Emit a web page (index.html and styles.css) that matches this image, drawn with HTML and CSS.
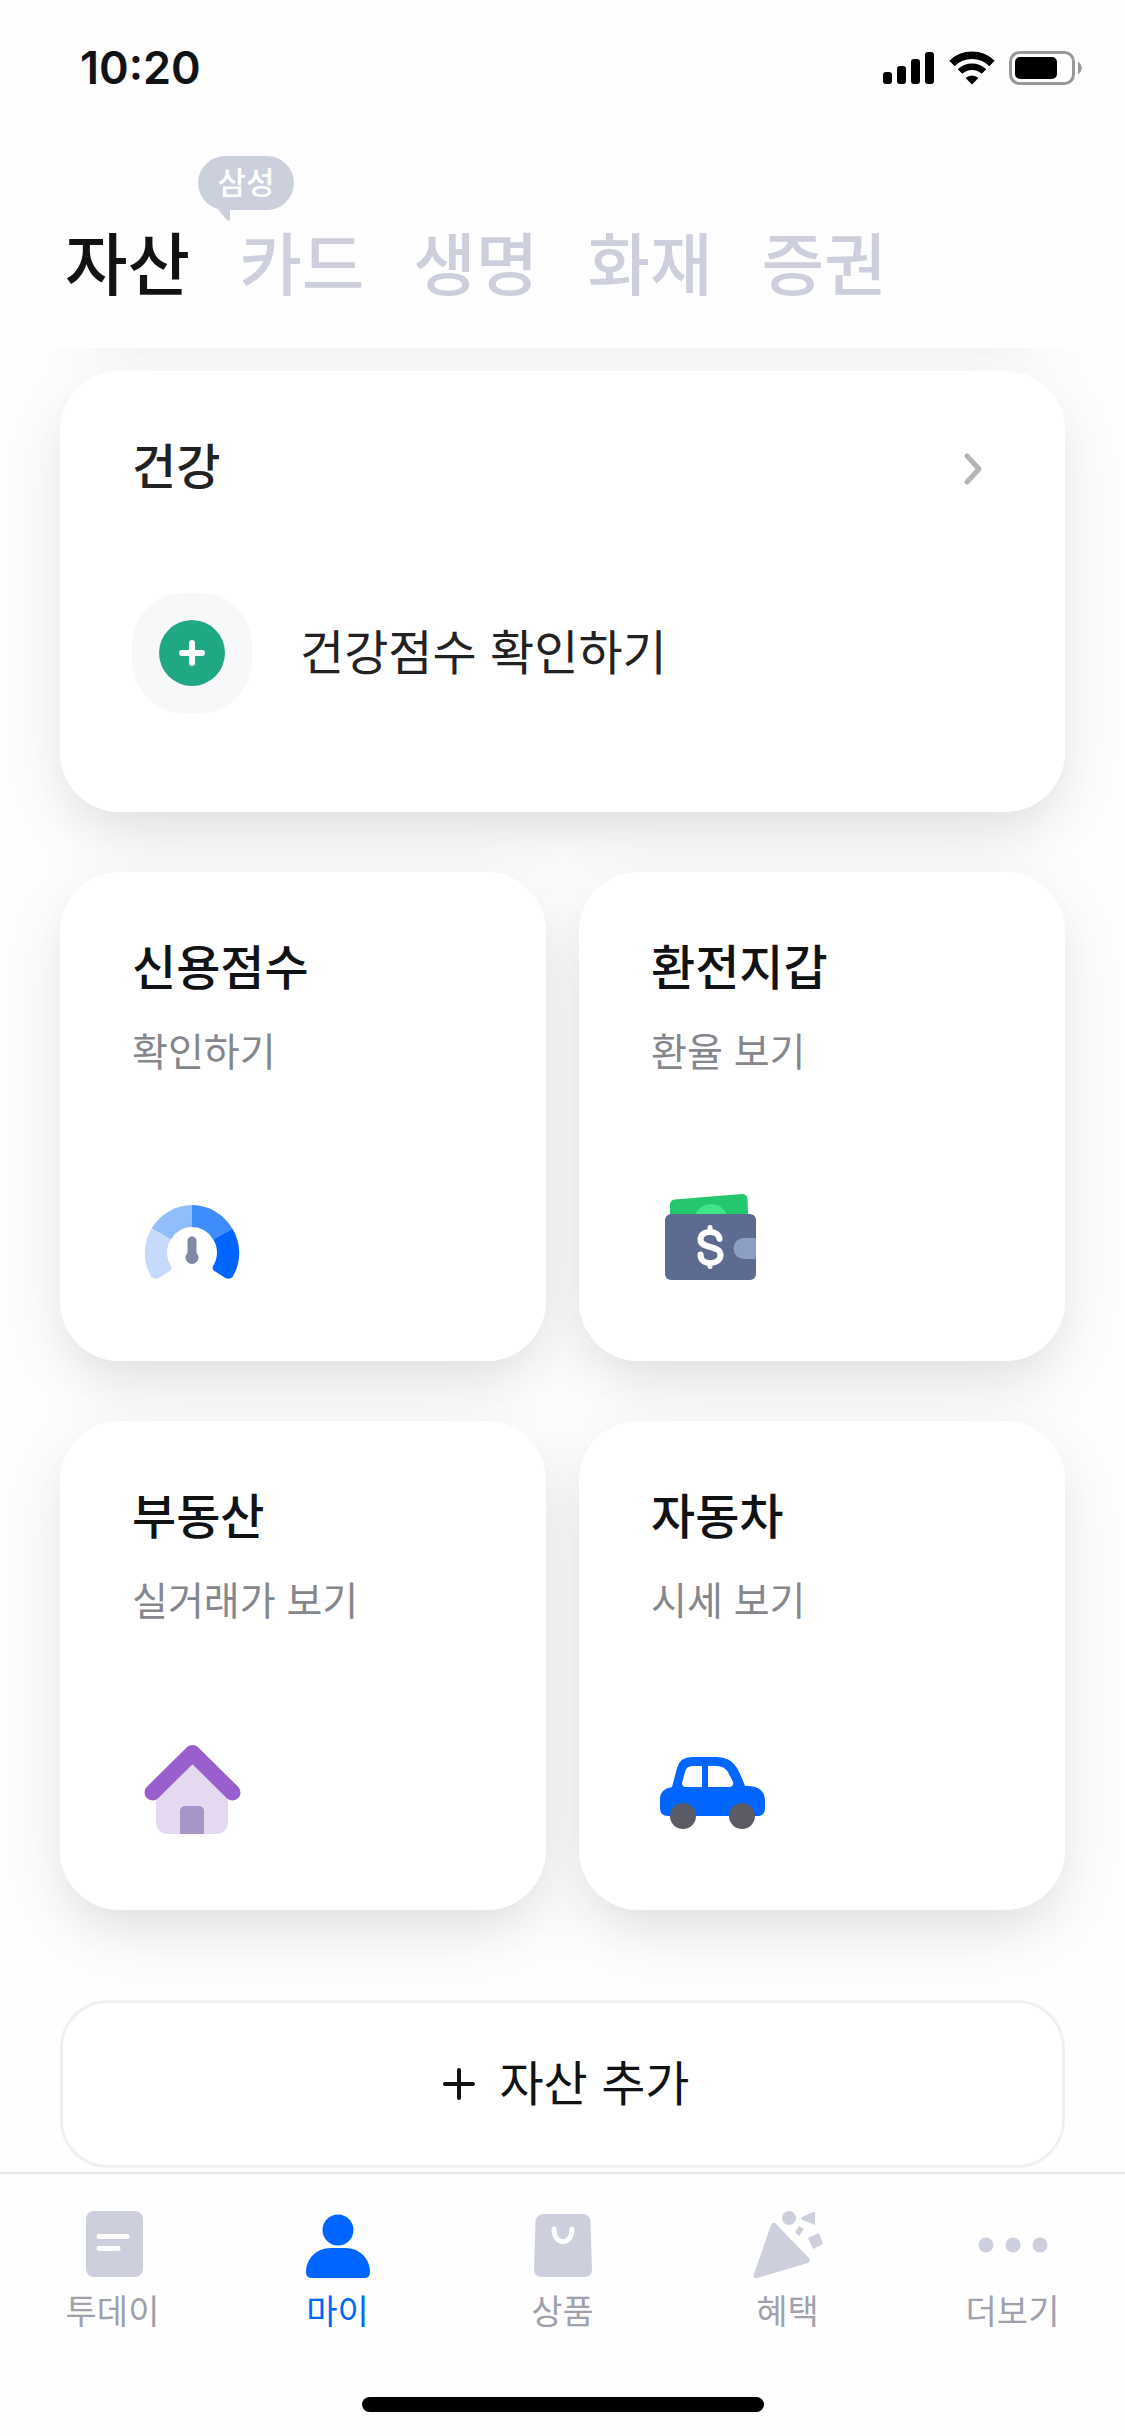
FILE: index.html
```html
<!DOCTYPE html>
<html lang="ko">
<head>
<meta charset="utf-8">
<meta name="viewport" content="width=device-width, initial-scale=1">
<title>자산</title>
<link rel="stylesheet" href="styles.css">
</head>
<body>
<div class="app">
  <header class="header">
    <div class="status">
      <time class="status-time">10:20</time>
      <div class="status-icons">
        <svg width="52" height="34" viewBox="0 0 52 34" aria-hidden="true">
          <rect x="0" y="21" width="9" height="12" rx="3"/>
          <rect x="14" y="15" width="9" height="18" rx="3"/>
          <rect x="28" y="8" width="9" height="25" rx="3"/>
          <rect x="42" y="1" width="9" height="32" rx="3"/>
        </svg>
        <svg width="46" height="34" viewBox="0 0 46 34" aria-hidden="true">
          <g fill="none" stroke="#000">
            <path d="M3 12.500A28.500 28.500 0 0 1 43 12.500" stroke-width="7.500"/>
            <path d="M11 20.500A17.500 17.500 0 0 1 35 20.500" stroke-width="6.500"/>
          </g>
          <path d="M16.500 27a9.500 9.500 0 0 1 13 0L23 33.500z"/>
        </svg>
        <svg width="74" height="34" viewBox="0 0 74 34" aria-hidden="true">
          <rect x="1.500" y="1.500" width="63" height="31" rx="9" fill="none" stroke="#999" stroke-width="3"/>
          <rect x="6" y="6" width="42" height="22" rx="5"/>
          <path d="M69 11c5 2 5 10 0 12z" fill="#999"/>
        </svg>
      </div>
    </div>
    <nav class="tabs" aria-label="자산 메뉴">
      <a class="tab tab-active" href="#" aria-current="page">자산</a>
      <a class="tab" href="#">카드
        <span class="badge">삼성
          <svg class="badge-tail" width="32" height="34" viewBox="0 0 32 34" aria-hidden="true"><path d="M0 0L27 32Q30 35 30 30V16z"/></svg>
        </span>
      </a>
      <a class="tab" href="#">생명</a>
      <a class="tab" href="#">화재</a>
      <a class="tab" href="#">증권</a>
    </nav>
  </header>

  <main class="feed">
    <section class="card health">
      <a class="health-head" href="#">
        <h2 class="title title-soft">건강</h2>
        <svg class="chevron" width="24" height="32" viewBox="0 0 24 32" aria-hidden="true"><path d="M6 3L18 16L6 29" fill="none" stroke="#b4b5b9" stroke-width="5" stroke-linecap="round" stroke-linejoin="round"/></svg>
      </a>
      <a class="health-row" href="#">
        <span class="health-icon">
          <svg width="66" height="66" viewBox="0 0 66 66" aria-hidden="true"><circle cx="33" cy="33" r="33" fill="#20a884"/><path d="M33 23V43M23 33H43" stroke="#fff" stroke-width="6" stroke-linecap="round"/></svg>
        </span>
        <span class="health-label">건강점수 확인하기</span>
      </a>
    </section>

    <div class="grid">
      <a class="card tile" href="#">
        <h2 class="title">신용점수</h2>
        <p class="sub">확인하기</p>
        <svg class="tile-icon" width="120" height="120" viewBox="0 0 120 120" aria-hidden="true">
          <g fill="none" stroke-width="22">
            <path d="M29.300 44A35.500 35.500 0 0 1 60 26" stroke="#92bdfd"/>
            <path d="M60 26A35.500 35.500 0 0 1 90.700 44" stroke="#3f8cfd"/>
          </g>
          <path d="M19.700 38.500L38.800 49.500A24.500 24.500 0 0 0 39 76Q40.500 79 37.500 81L26.500 88Q22.500 90 19.500 87A46.500 46.500 0 0 1 19.700 38.500z" fill="#c5dafd"/>
          <path d="M100.300 38.500L81.200 49.500A24.500 24.500 0 0 1 81 76Q79.500 79 82.500 81L93.500 88Q97.500 90 100.500 87A46.500 46.500 0 0 0 100.300 38.500z" fill="#0066ff"/>
          <path d="M60 51V66" stroke="#7f88a5" stroke-width="9" stroke-linecap="round"/>
          <circle cx="60" cy="67.500" r="6.500" fill="#7f88a5"/>
        </svg>
      </a>
      <a class="card tile" href="#">
        <h2 class="title">환전지갑</h2>
        <p class="sub">환율 보기</p>
        <svg class="tile-icon" width="120" height="120" viewBox="1 3 120 120" aria-hidden="true">
          <path d="M20 48V18q0-5 5-5.500L92 7q5 0 5.500 5L99 48z" fill="#23c86e"/>
          <circle cx="61" cy="34" r="17" fill="#40e588"/>
          <rect x="15" y="27" width="91" height="66" rx="6" fill="#5c6b8f"/>
          <path d="M106 51H94a10.500 10.500 0 0 0 0 21H106z" fill="#8d9ec5"/>
          <path d="M60 40.500V45M60 76V79.500" stroke="#fff" stroke-width="5" stroke-linecap="round"/>
          <path d="M69.500 52C69 47.500 65 45 60 45C54 45 50.500 48 50.500 52.500C50.500 62.500 70.500 57.500 70.500 68C70.500 73 66 76 60 76C54 76 50.500 73 50.500 67.500" fill="none" stroke="#fff" stroke-width="6" stroke-linecap="round"/>
        </svg>
      </a>
      <a class="card tile" href="#">
        <h2 class="title">부동산</h2>
        <p class="sub">실거래가 보기</p>
        <svg class="tile-icon" width="120" height="120" viewBox="0 0 120 120" aria-hidden="true">
          <path d="M24 56L60 18L96 56V83a12 12 0 0 1-12 12H36a12 12 0 0 1-12-12z" fill="#e5d9f2"/>
          <path d="M48 95V72a5 5 0 0 1 5-5H67a5 5 0 0 1 5 5V95z" fill="#a795c7"/>
          <path d="M20.500 53.500L60.500 14L100.500 53.500" fill="none" stroke="#9a5fcf" stroke-width="16" stroke-linecap="round" stroke-linejoin="round"/>
        </svg>
      </a>
      <a class="card tile" href="#">
        <h2 class="title">자동차</h2>
        <p class="sub">시세 보기</p>
        <svg class="tile-icon" width="120" height="120" viewBox="1 0 120 120" aria-hidden="true">
          <path d="M22 48L27 29Q30 18 42 18H67Q80 18 87 29Q91 36 95 47H99Q115 48 115 62V69Q115 77 107 77H18Q10 77 10 69V60Q10 50 22 48z" fill="#0066ff"/>
          <path d="M52 27H43Q36 27 35 33L32 44Q32 48 36 48H52z" fill="#fff"/>
          <path d="M58 27H67Q74 27 78 33L83 43Q84 48 79 48H58z" fill="#fff"/>
          <circle cx="33" cy="77" r="13" fill="#5b5b66"/>
          <circle cx="92" cy="77" r="13" fill="#5b5b66"/>
        </svg>
      </a>
    </div>

    <button class="add" type="button">
      <svg width="32" height="32" viewBox="0 0 32 32" aria-hidden="true"><path d="M16 2V30M2 16H30" stroke="#111" stroke-width="4" stroke-linecap="round"/></svg>
      <span class="add-label">자산 추가</span>
    </button>
  </main>

  <footer class="bottom">
    <nav class="menu" aria-label="주 메뉴">
      <a class="menu-item" href="#">
        <svg width="72" height="72" viewBox="0 0 72 72" aria-hidden="true"><rect x="9" y="3" width="57" height="66" rx="8"/><path d="M22 28.500H50M22 40.500H41" stroke="#fff" stroke-width="5" stroke-linecap="round"/></svg>
        투데이
      </a>
      <a class="menu-item menu-active" href="#" aria-current="page">
        <svg width="72" height="72" viewBox="0 0 72 72" aria-hidden="true"><circle cx="36" cy="22" r="15.500"/><path d="M29 40H43C59 40 68 52 68 64Q68 70 62 70H10Q4 70 4 64C4 52 13 40 29 40z"/></svg>
        마이
      </a>
      <a class="menu-item" href="#">
        <svg width="72" height="72" viewBox="0 0 72 72" aria-hidden="true"><path d="M17 6H55Q63 6 63.500 14L65 61Q65 69 57 69H15Q7 69 7 61L8.500 14Q9 6 17 6z"/><path d="M27 21C27 38 45 38 45 21" fill="none" stroke="#fff" stroke-width="5" stroke-linecap="round"/></svg>
        상품
      </a>
      <a class="menu-item" href="#">
        <svg width="72" height="72" viewBox="0 0 72 72" aria-hidden="true"><path d="M19 17Q21 13 24 16L57 50Q59 53 56 55L5 70Q1 71 2 66z"/><circle cx="37" cy="10" r="7"/><path d="M50 9L61 4Q63 3 63 5V16Q63 18 61 16L50 12Q48 10 50 9zM47 18L52 21L47 28L43 24zM56 30L67 25L71 36L61 41z"/></svg>
        혜택
      </a>
      <a class="menu-item" href="#">
        <svg width="72" height="72" viewBox="0 0 72 72" aria-hidden="true"><circle cx="9" cy="37" r="7.500"/><circle cx="36" cy="37" r="7.500"/><circle cx="63" cy="37" r="7.500"/></svg>
        더보기
      </a>
    </nav>
    <div class="home-indicator"></div>
  </footer>
</div>
</body>
</html>
```
FILE: styles.css
```css
* {
  box-sizing: border-box;
}

body {
  margin: 0;
  background: #fefefe;
  color: #111214;
  font-family: "Noto Sans CJK KR", sans-serif;
}

a {
  color: inherit;
  text-decoration: none;
}

h2,
p {
  margin: 0;
}

svg {
  display: block;
  flex: none;
}

.app {
  display: flex;
  flex-direction: column;
  min-height: 100vh;
}

.header {
  padding-bottom: 39px;
}

.status {
  display: flex;
  align-items: center;
  justify-content: space-between;
  height: 136px;
  padding: 0 42px 0 80px;
}

.status-time {
  font-family: Inter, sans-serif;
  font-size: 45px;
  font-weight: 600;
  line-height: 56px;
}

.status-icons {
  display: flex;
  align-items: center;
  gap: 14px;
}

.tabs {
  display: flex;
  gap: 49px;
  padding: 77px 65px 0;
}

.tab {
  position: relative;
  color: #cdd0dc;
  font-size: 68px;
  font-weight: 500;
  line-height: 96px;
}

.tab-active {
  color: #111214;
}

.badge {
  position: absolute;
  left: -41px;
  top: -57px;
  width: 96px;
  border-radius: 27px;
  background: #cbd0dc;
  color: #fff;
  font-size: 31px;
  line-height: 50px;
  padding-bottom: 4px;
  text-align: center;
}

.badge-tail {
  position: absolute;
  left: 2px;
  top: 32px;
  fill: #cbd0dc;
}

.feed {
  position: relative;
  z-index: 0;
  flex: 1;
  padding: 23px 60px 3px;
  overflow: hidden;
}

.card {
  position: relative;
  display: block;
  border-radius: 60px;
  background: #fff;
}

.feed::before,
.card::before {
  content: "";
  position: absolute;
  z-index: -1;
  inset: 0;
  border-radius: 60px;
  box-shadow: 0 24px 40px -8px rgba(0, 0, 0, 0.06), 0 20px 80px rgba(0, 0, 0, 0.08);
}

.feed::before {
  inset: -337px 60px auto;
  height: 300px;
}

.health {
  padding: 60px 72px 99px;
}

.health-head {
  display: flex;
  align-items: center;
  justify-content: space-between;
  padding-right: 8px;
}

.chevron {
  margin-top: 12px;
}

.title {
  font-size: 48px;
  font-weight: 500;
  line-height: 64px;
}

.title-soft {
  color: #222;
}

.health-row {
  display: flex;
  align-items: center;
  gap: 48px;
  margin-top: 98px;
}

.health-icon {
  display: grid;
  place-items: center;
  width: 120px;
  height: 120px;
  border-radius: 52px;
  background: #f6f8fa;
}

.health-label {
  padding-bottom: 8px;
  color: #222;
  font-size: 48px;
  line-height: 64px;
}

.grid {
  display: grid;
  grid-template-columns: 1fr 1fr;
  gap: 60px 33px;
  margin-top: 60px;
}

.tile {
  padding: 60px 72px 51px;
}

.sub {
  margin-top: 25px;
  color: #85878d;
  font-size: 39px;
  line-height: 56px;
}

.tile-icon {
  margin-top: 113px;
}

.add {
  display: flex;
  align-items: center;
  justify-content: center;
  gap: 24px;
  width: 100%;
  height: 168px;
  margin-top: 90px;
  padding: 0 0 0 8px;
  border: 3px solid #f0f0f0;
  border-radius: 48px;
  background: #fff;
  color: #111214;
  font: inherit;
  font-size: 48px;
}

.add-label {
  padding-bottom: 8px;
}

.bottom {
  border-top: 2px solid #e6e6e8;
  padding: 34px 0 24px;
}

.menu {
  display: grid;
  grid-template-columns: repeat(5, 1fr);
}

.menu-item {
  display: flex;
  flex-direction: column;
  align-items: center;
  gap: 6px;
  color: #9fa1ac;
  fill: #cdd0dc;
  font-size: 34px;
  line-height: 48px;
}

.menu-active {
  color: #0066ff;
  fill: #0066ff;
}

.home-indicator {
  width: 36%;
  max-width: 402px;
  height: 15px;
  margin: 63px auto 0;
  border-radius: 8px;
  background: #000;
}
```
